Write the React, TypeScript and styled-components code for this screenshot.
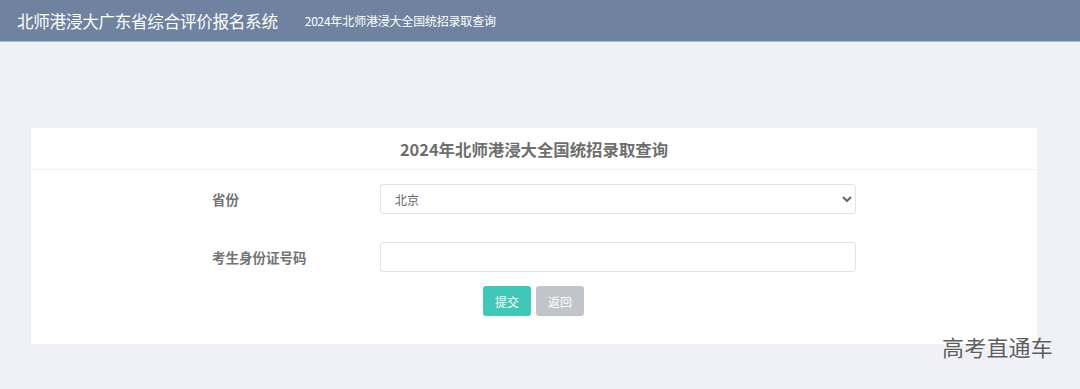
import React from 'react';
import styled, { createGlobalStyle } from 'styled-components';

const GlobalStyle = createGlobalStyle`
  html, body {
    margin: 0;
    padding: 0;
    background: #f0f1f6;
    font-family: "Noto Sans CJK SC", "Noto Sans", sans-serif;
  }
`;

const Page = styled.div`
  width: 1080px;
  height: 389px;
  overflow: hidden;
  position: relative;
  background: #f0f1f6;
`;

const Header = styled.header`
  height: 41px;
  background: #6f83a0;
  border-bottom: 1px solid #a9b6c8;
  display: flex;
  align-items: center;
  padding-left: 17px;
  color: #ffffff;
`;

const SiteTitle = styled.div`
  font-size: 16.6px;
  letter-spacing: -0.3px;
`;

const SubTitle = styled.div`
  font-size: 12px;
  margin-left: 27px;
  letter-spacing: -0.2px;
`;

const Main = styled.main`
  padding: 86px 43px 0 31px;
`;

const Card = styled.section`
  background: #ffffff;
  border-radius: 3px;
  height: 216px;
`;

const CardTitle = styled.h2`
  margin: 0;
  height: 41px;
  border-bottom: 1px solid #f1f1f3;
  display: flex;
  align-items: center;
  justify-content: center;
  font-size: 16.4px;
  font-weight: bold;
  color: #6e6e6e;
`;

const Form = styled.form`
  padding-top: 14px;
`;

const Row = styled.div`
  display: grid;
  grid-template-columns: 181px 168px 476px;
  align-items: center;
  height: 30px;
  margin-bottom: 28px;
`;

const Label = styled.label`
  grid-column: 2;
  font-size: 13.5px;
  font-weight: bold;
  color: #737373;
`;

const fieldCss = `
  grid-column: 3;
  box-sizing: border-box;
  height: 30px;
  width: 476px;
  border: 1px solid #e2e3e6;
  border-radius: 3px;
  background: #ffffff;
  font-family: "Noto Sans CJK SC", "Noto Sans", sans-serif;
  font-size: 12px;
  color: #666666;
  outline: none;
`;

const Select = styled.select`
  ${fieldCss}
  padding: 0 10px;
`;

const Input = styled.input`
  ${fieldCss}
  padding: 0 10px;
`;

const Buttons = styled.div`
  display: flex;
  gap: 5px;
  padding-left: 452px;
  margin-top: -14px;
`;

const Button = styled.button<{ $primary?: boolean }>`
  width: 48px;
  height: 30px;
  border: none;
  border-radius: 3px;
  background: ${p => (p.$primary ? '#3fc7b8' : '#c1c4c9')};
  color: #ffffff;
  font-family: "Noto Sans CJK SC", "Noto Sans", sans-serif;
  font-size: 12px;
  padding: 0;
  cursor: pointer;
`;

const Watermark = styled.div`
  position: absolute;
  right: 27px;
  bottom: 27px;
  font-size: 22px;
  color: #5e5e5e;
  letter-spacing: 0.2px;
  text-shadow: 0 0 2px #ffffff;
`;

const App = () => {
  return (
    <Page>
      <GlobalStyle />
      <Header>
        <SiteTitle>北师港浸大广东省综合评价报名系统</SiteTitle>
        <SubTitle>2024年北师港浸大全国统招录取查询</SubTitle>
      </Header>
      <Main>
        <Card>
          <CardTitle>2024年北师港浸大全国统招录取查询</CardTitle>
          <Form onSubmit={e => e.preventDefault()}>
            <Row>
              <Label>省份</Label>
              <Select defaultValue="北京">
                <option>北京</option>
                <option>天津</option>
                <option>广东</option>
              </Select>
            </Row>
            <Row>
              <Label>考生身份证号码</Label>
              <Input type="text" />
            </Row>
            <Buttons>
              <Button $primary type="submit">提交</Button>
              <Button type="button">返回</Button>
            </Buttons>
          </Form>
        </Card>
      </Main>
      <Watermark>高考直通车</Watermark>
    </Page>
  );
};

export default App;
